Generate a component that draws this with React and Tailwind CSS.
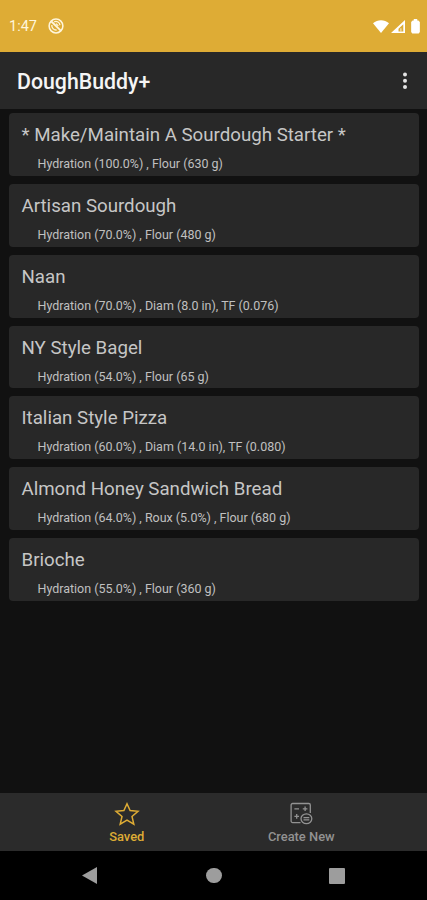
import { useState } from 'react';

const RECIPES = [
  { id: 1, name: '* Make/Maintain A Sourdough Starter *', details: 'Hydration (100.0%) , Flour (630 g)' },
  { id: 2, name: 'Artisan Sourdough', details: 'Hydration (70.0%) , Flour (480 g)' },
  { id: 3, name: 'Naan', details: 'Hydration (70.0%) , Diam (8.0 in), TF (0.076)' },
  { id: 4, name: 'NY Style Bagel', details: 'Hydration (54.0%) , Flour (65 g)' },
  { id: 5, name: 'Italian Style Pizza', details: 'Hydration (60.0%) , Diam (14.0 in), TF (0.080)' },
  { id: 6, name: 'Almond Honey Sandwich Bread', details: 'Hydration (64.0%) , Roux (5.0%) , Flour (680 g)' },
  { id: 7, name: 'Brioche', details: 'Hydration (55.0%) , Flour (360 g)' },
];

function StatusBar() {
  return (
    <div className="flex h-[51.5px] shrink-0 items-center bg-[#deac35] pt-px pr-[7px] pl-[9px] text-[#fff6dc]">
      <span className="pt-[2px] text-[14.5px] leading-none">1:47</span>
      <svg className="ml-[11px] h-4 w-4" viewBox="0 0 16 16" fill="none" stroke="currentColor">
        <circle cx="8" cy="8" r="6.9" strokeWidth="1.5" />
        <path d="M3.4 3.5 12.8 12.6" strokeWidth="1.8" />
        <path d="M6.2 3.8c2.6-1.2 5.4.5 5.8 3.3M3.8 7c-.3 2.8 2 5.2 4.8 5M8 5.6l2.3 2.3" strokeWidth="1.3" />
      </svg>
      <div className="ml-auto flex items-center text-white">
        <svg className="h-[13px] w-4" viewBox="0 0 16 13" fill="currentColor">
          <path d="M0 3.2C4.6-.8 11.4-.8 16 3.2L8 13z" />
        </svg>
        <svg className="ml-0.5 h-[13px] w-[14px]" viewBox="0 0 14 13" fill="currentColor">
          <path fillRule="evenodd" d="M14 0v13H0zM12.3 4.2 7.5 8.7v2.8h4.8z" />
          <path d="M9.2 8.3h1.3v3.2H9.2z" opacity=".6" />
        </svg>
        <svg className="ml-[6px] h-[14.5px] w-[9px]" viewBox="0 0 9 15" fill="currentColor">
          <path d="M2.7 0h3.6v1.6h1.2L9 3.1V13.5L7.8 15H1.2L0 13.5V3.1l1.5-1.5h1.2z" />
        </svg>
      </div>
    </div>
  );
}

function AppBar() {
  return (
    <header className="flex h-[57.5px] shrink-0 items-center justify-between bg-[#282828] pt-[2px] pr-5 pl-[17px]">
      <h1 className="pt-[2px] text-[21.3px] font-medium text-[#f5f5f5]">DoughBuddy+</h1>
      <button type="button" aria-label="More options" className="text-[#e4e4e4]">
        <svg className="h-[18px] w-1" viewBox="0 0 4 18" fill="currentColor">
          <circle cx="2" cy="2.6" r="2" />
          <circle cx="2" cy="8.8" r="2" />
          <circle cx="2" cy="15" r="2" />
        </svg>
      </button>
    </header>
  );
}

function RecipeCard({ recipe }) {
  return (
    <li className="h-[62.8px] rounded-[4px] bg-[#282828] pt-[9px] pl-[12.5px]">
      <p className="text-[18.7px] leading-[26px] whitespace-nowrap text-[#c6c6c6]">{recipe.name}</p>
      <p className="mt-[8px] pl-4 text-[12.48px] leading-4 whitespace-nowrap text-[#c0c0c0]">
        {recipe.details}
      </p>
    </li>
  );
}

function StarIcon() {
  return (
    <svg className="h-6 w-[26px]" viewBox="0 0 26 24" fill="none" stroke="currentColor" strokeWidth="1.5">
      <path d="M13 1.8 16.1 8.6 24 9.3 18 14.5 19.8 22.2 13 18.1 6.2 22.2 8 14.5 2 9.3 9.9 8.6z" />
    </svg>
  );
}

function CalculatorIcon() {
  return (
    <svg className="h-6 w-[26px]" viewBox="0 0 26 24" fill="none" stroke="currentColor" strokeWidth="1.3">
      <path d="M12.5 20.6H4.6a1.5 1.5 0 0 1-1.5-1.5V3a1.5 1.5 0 0 1 1.5-1.5h16.2A1.5 1.5 0 0 1 22.3 3v8" />
      <path d="M6.4 6.8h4.6M14.8 6.8h4.6M17.1 4.5v4.6M6.4 14.4H11M8.7 12.1v4.6" />
      <ellipse cx="18.4" cy="16.8" rx="5.4" ry="4.9" />
      <path d="M15.5 15.7h5.8M15.5 17.9h5.8" />
    </svg>
  );
}

function TabButton({ label, icon, active, onClick }) {
  return (
    <button
      type="button"
      onClick={onClick}
      className={`flex w-[174.5px] flex-col items-center pt-[9px] ${active ? 'text-[#deac35]' : 'text-[#929292]'}`}
    >
      {icon}
      <span className="mt-[3px] text-[12.9px] leading-4 font-medium">{label}</span>
    </button>
  );
}

function SystemNav() {
  return (
    <div className="flex h-[49px] shrink-0 items-center justify-between bg-black pr-[82px] pl-[82px] text-[#9d9d9d]">
      <svg className="h-[17px] w-[15px]" viewBox="0 0 15 17" fill="currentColor">
        <path d="M15 0v17L0 8.5z" />
      </svg>
      <div className="ml-[2px] h-[15.5px] w-[15.5px] rounded-full bg-[#9d9d9d]" />
      <div className="h-4 w-4 rounded-[1px] bg-[#9d9d9d]" />
    </div>
  );
}

export default function App() {
  const [tab, setTab] = useState('saved');

  return (
    <div className="flex h-[900px] w-[427px] flex-col overflow-hidden bg-[#111111] font-['Roboto',sans-serif]">
      <StatusBar />
      <AppBar />
      <ul className="flex flex-1 flex-col gap-[8px] pt-[4.3px] pr-2 pl-[9px]">
        {RECIPES.map((recipe) => (
          <RecipeCard key={recipe.id} recipe={recipe} />
        ))}
      </ul>
      <nav className="flex h-[58px] shrink-0 justify-center bg-[#2b2b2b] pl-px">
        <TabButton label="Saved" icon={<StarIcon />} active={tab === 'saved'} onClick={() => setTab('saved')} />
        <TabButton
          label="Create New"
          icon={<CalculatorIcon />}
          active={tab === 'create'}
          onClick={() => setTab('create')}
        />
      </nav>
      <SystemNav />
    </div>
  );
}
